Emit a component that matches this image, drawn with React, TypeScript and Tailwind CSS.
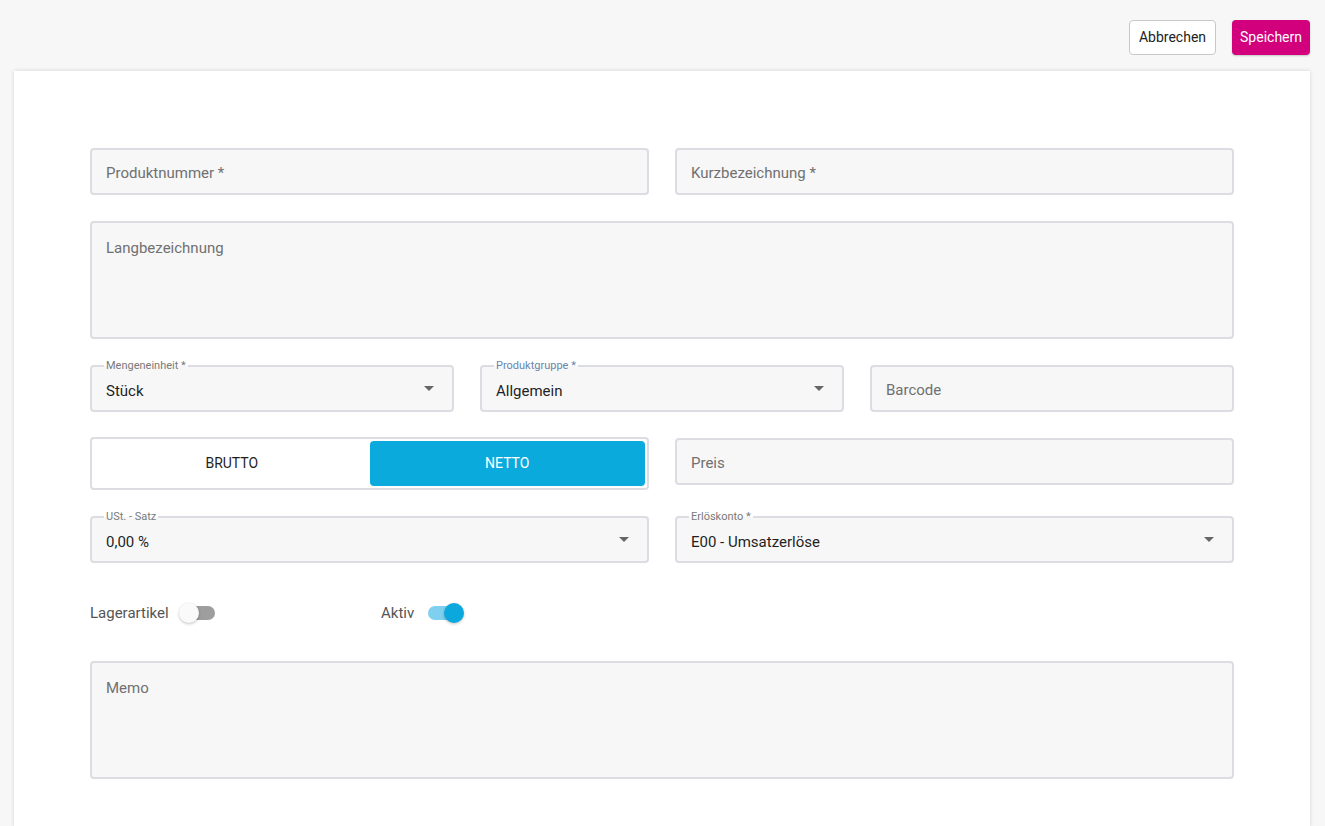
import type { ReactNode } from "react";

const font = { fontFamily: "Roboto, 'Noto Sans', sans-serif" };

function Field({ label, value, placeholder, select, labelColor, className = "" }: {
  label?: string;
  value?: string;
  placeholder?: string;
  select?: boolean;
  labelColor?: string;
  className?: string;
}) {
  return (
    <div className={`relative h-[47px] rounded-[4px] border-2 border-[#dcdce3] bg-[#f7f7f8] flex items-center pl-[14px] pr-[14px] ${className}`}>
      {label && (
        <span
          className={`absolute left-[12px] -top-[8px] px-[2px] text-[11px] leading-[14px] bg-gradient-to-b from-white from-50% to-[#f7f7f8] to-50% ${labelColor ?? "text-[#7a7a7a]"}`}
        >
          {label}
        </span>
      )}
      <span className={`flex-1 text-[15px] ${value ? "text-[#1f1f1f] mt-[5px]" : "text-[#707070] mt-[3px]"}`}>
        {value ?? placeholder}
      </span>
      {select && (
        <span className="w-0 h-0 border-x-[5px] border-t-[5px] border-x-transparent border-t-[#666] mr-[4px]" />
      )}
    </div>
  );
}

function Area({ placeholder }: { placeholder: string }) {
  return (
    <div className="h-[118px] rounded-[4px] border-2 border-[#dcdce3] bg-[#f7f7f8] px-[14px] pt-[13px]">
      <span className="text-[15px] text-[#707070]">{placeholder}</span>
    </div>
  );
}

function Switch({ on }: { on: boolean }) {
  return (
    <div className="relative w-[38px] h-[20px] flex items-center">
      <div className={`mx-auto w-[34px] h-[14px] rounded-full ${on ? "bg-[#7fd0ef]" : "bg-[#9e9e9e]"}`} />
      <div
        className={`absolute top-0 w-[20px] h-[20px] rounded-full shadow-[0_1px_3px_rgba(0,0,0,0.25)] ${on ? "right-0 bg-[#0aa8dc]" : "left-0 bg-[#fafafa]"}`}
      />
    </div>
  );
}

function Row({ children, cols, className = "" }: { children: ReactNode; cols: string; className?: string }) {
  return <div className={`grid ${cols} gap-x-[26px] items-start ${className}`}>{children}</div>;
}

export default function App() {
  return (
    <div className="min-h-[826px] bg-[#f7f7f7] overflow-hidden" style={font}>
      <header className="flex justify-end gap-[16px] pt-[20px] pb-[16px] pr-[15px]">
        <button className="h-[35px] px-[9px] rounded-[4px] border border-[#c8c8c8] bg-white text-[14px] text-[#222]">
          Abbrechen
        </button>
        <button className="h-[35px] px-[8px] rounded-[4px] bg-[#d3007d] text-[14px] text-white shadow-[0_1px_2px_rgba(0,0,0,0.2)]">
          Speichern
        </button>
      </header>

      <main className="ml-[14px] mr-[15px] bg-white shadow-[0_0_4px_rgba(0,0,0,0.15)] px-[76px] pt-[77px] pb-[48px] flex flex-col gap-[26px]">
        <Row cols="grid-cols-2">
          <Field placeholder="Produktnummer *" />
          <Field placeholder="Kurzbezeichnung *" />
        </Row>

        <Area placeholder="Langbezeichnung" />

        <Row cols="grid-cols-3">
          <Field label="Mengeneinheit *" value="Stück" select />
          <Field label="Produktgruppe *" value="Allgemein" select labelColor="text-[#6a86ab]" />
          <Field placeholder="Barcode" />
        </Row>

        <Row cols="grid-cols-2" className="-mt-[1px]">
          <div className="h-[53px] rounded-[4px] border-2 border-[#dcdce3] bg-white p-[2px] grid grid-cols-2">
            <button className="text-[14px] text-[#1f1f1f]">BRUTTO</button>
            <button className="rounded-[4px] bg-[#0aabdc] text-[14px] text-white">NETTO</button>
          </div>
          <Field placeholder="Preis" className="mt-[1px]" />
        </Row>

        <Row cols="grid-cols-2">
          <Field label="USt. - Satz" value="0,00 %" select />
          <Field label="Erlöskonto *" value="E00 - Umsatzerlöse" select />
        </Row>

        <div className="flex items-center h-[24px] mt-[12px] mb-[10px]">
          <div className="flex items-center gap-[10px] w-[291px]">
            <span className="text-[15px] text-[#555]">Lagerartikel</span>
            <Switch on={false} />
          </div>
          <div className="flex items-center gap-[12px]">
            <span className="text-[15px] text-[#555]">Aktiv</span>
            <Switch on />
          </div>
        </div>

        <Area placeholder="Memo" />
      </main>
    </div>
  );
}
